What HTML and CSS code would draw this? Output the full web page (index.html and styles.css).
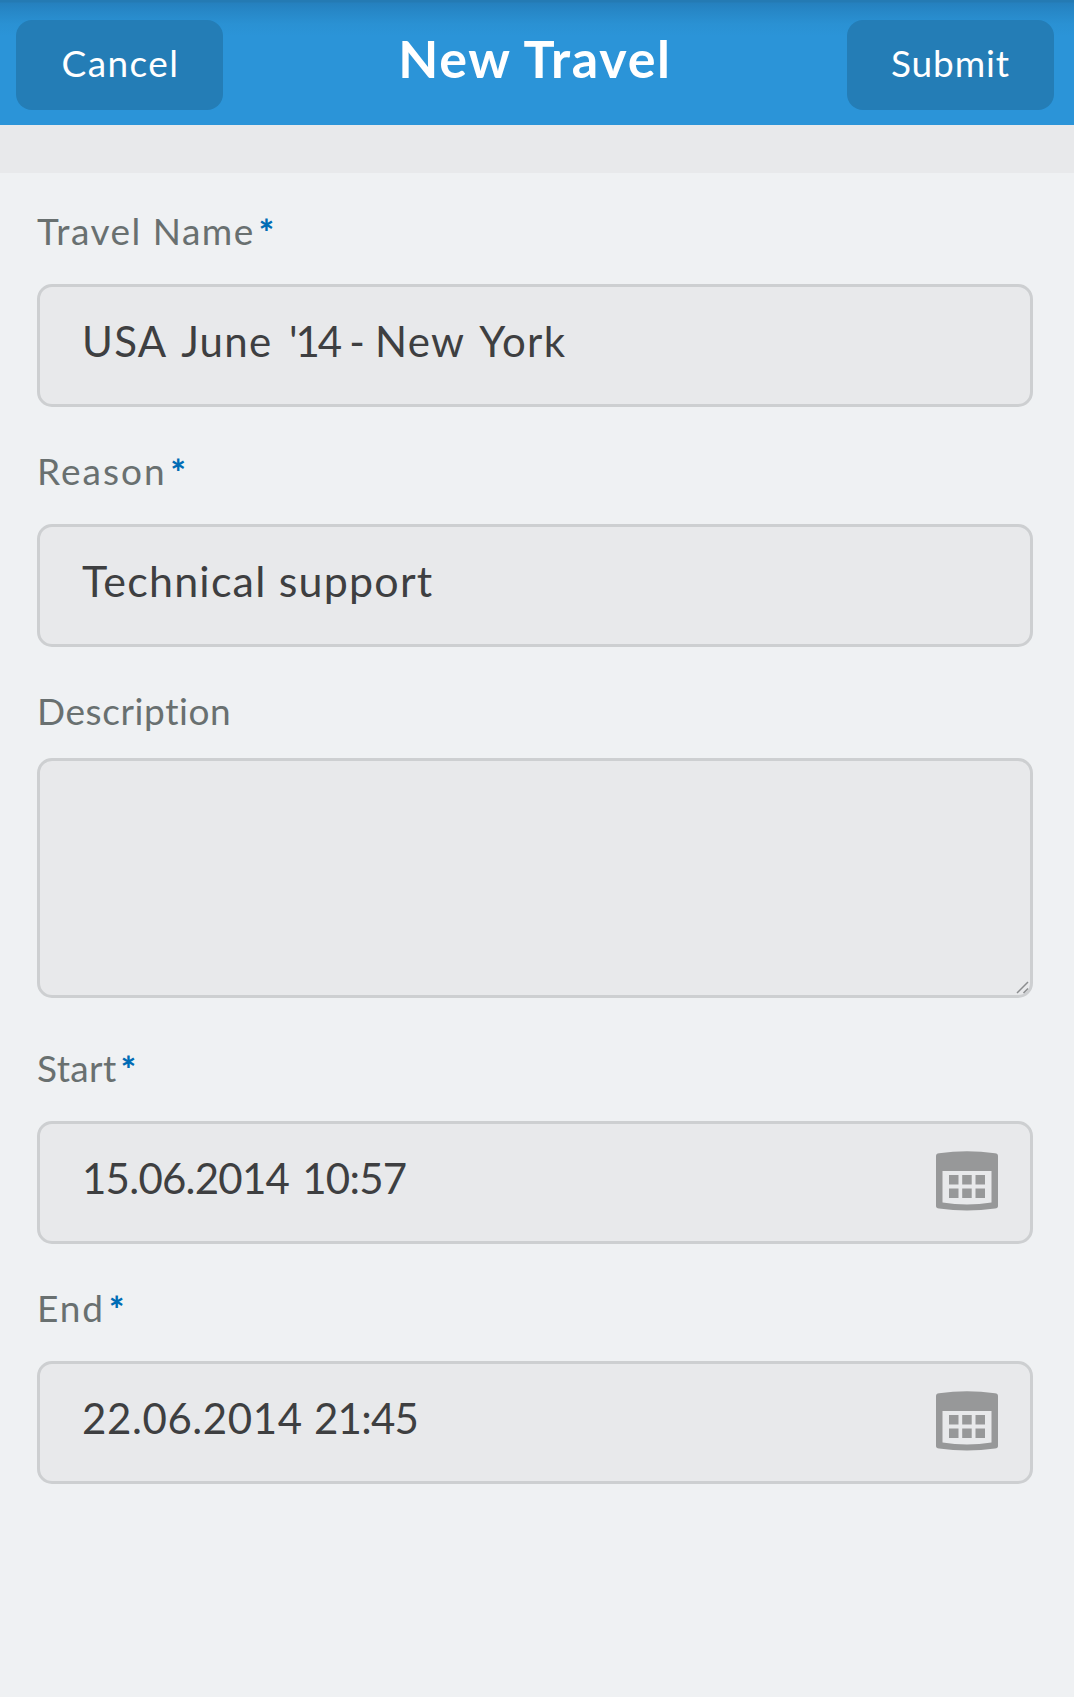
FILE: index.html
```html
<!DOCTYPE html>
<html lang="en">
<head>
<meta charset="utf-8">
<title>New Travel</title>
<link rel="stylesheet" href="styles.css">
</head>
<body>
<header class="bar">
  <button class="action cancel" type="button">Cancel</button>
  <h1 class="title">New Travel</h1>
  <button class="action submit" type="button">Submit</button>
</header>
<div class="strip"></div>
<form class="form">
  <div class="field">
    <div class="label"><span class="l-name">Travel Name</span><b class="req">*</b></div>
    <div class="input"><span class="v-name"><span class="wide">USA June <span class="year">'14</span></span> - <span class="wide">New York</span></span></div>
  </div>
  <div class="field">
    <div class="label"><span class="l-reason">Reason</span><b class="req">*</b></div>
    <div class="input"><span class="v-reason">Technical support</span></div>
  </div>
  <div class="field field-area">
    <div class="label"><span class="l-desc">Description</span></div>
    <div class="input area">
      <svg class="grip" width="13" height="13" viewBox="0 0 13 13"><path d="M1 12L12 1M7.500 12L12 7.500"/></svg>
    </div>
  </div>
  <div class="field">
    <div class="label"><span class="l-start">Start</span><b class="req">*</b></div>
    <div class="input"><span class="v-start">15.06.2014 10:57</span>
      <svg class="calendar" width="62" height="60" viewBox="0 0 62 60"><path fill-rule="evenodd" d="M0 5Q0 2.500 3 2.200Q31-1.800 59 2.200Q62 2.500 62 5V55Q62 57.300 59 57.600Q31 61.600 3 57.600Q0 57.300 0 55ZM6.500 20V51.500Q31 55.500 55.500 51.500V20Z"/><path d="M13 24h9.500v9.500H13zM26.200 24h9.500v9.500h-9.500zM39.500 24H49v9.500h-9.500zM13 37.500h9.500V47H13zM26.200 37.500h9.500V47h-9.500zM39.500 37.500H49V47h-9.500z"/></svg>
    </div>
  </div>
  <div class="field">
    <div class="label"><span class="l-end">End</span><b class="req">*</b></div>
    <div class="input"><span class="v-end">22.06.2014 <span class="time">21:45</span></span>
      <svg class="calendar" width="62" height="60" viewBox="0 0 62 60"><path fill-rule="evenodd" d="M0 5Q0 2.500 3 2.200Q31-1.800 59 2.200Q62 2.500 62 5V55Q62 57.300 59 57.600Q31 61.600 3 57.600Q0 57.300 0 55ZM6.500 20V51.500Q31 55.500 55.500 51.500V20Z"/><path d="M13 24h9.500v9.500H13zM26.200 24h9.500v9.500h-9.500zM39.500 24H49v9.500h-9.500zM13 37.500h9.500V47H13zM26.200 37.500h9.500V47h-9.500zM39.500 37.500H49V47h-9.500z"/></svg>
    </div>
  </div>
</form>
</body>
</html>
```

FILE: styles.css
```css
* { box-sizing: border-box; }
body {
  margin: 0;
  min-height: 1697px;
  background: #eff1f3;
  font-family: Lato, "Open Sans", sans-serif;
  font-variant-ligatures: none;
  color: #3e3f41;
}
.bar {
  display: flex;
  justify-content: space-between;
  align-items: flex-start;
  height: 125px;
  padding: 20px 20px 0 16px;
  background: linear-gradient(#247ab3 0, #247ab3 2px, #2580be 3px, #2788c8 12px, #2a91d3 24px, #2b94d8 36px);
}
.action {
  width: 207px;
  height: 90px;
  padding: 0 0 4px;
  border: 0;
  border-radius: 16px;
  background: #247db6;
  color: #fff;
  font: 400 37px/86px Lato, sans-serif;
}
.cancel { padding-left: 2px; letter-spacing: 1.400px; }
.submit { letter-spacing: 0.900px; }
.title {
  margin: 0;
  color: #fff;
  font-size: 52px;
  font-weight: 700;
  line-height: 77px;
  letter-spacing: 1.700px;
}
.strip { height: 48px; background: #e8e9eb; }
.form { padding: 0 41px 0 37px; }
.field { padding-bottom: 6px; }
.label {
  display: flex;
  height: 111px;
  padding-top: 36px;
  color: #697070;
  font-size: 37px;
  line-height: 44px;
}
.field-area { padding-bottom: 12px; }
.field-area .label { height: 105px; }
.req { margin: 1px 0 0 4px; color: #006cb5; font-size: 36px; font-weight: 900; }
.l-name { letter-spacing: 1.500px; }
.l-reason { letter-spacing: 2px; }
.l-desc { letter-spacing: 0.600px; }
.l-start { letter-spacing: 0.400px; }
.l-end { letter-spacing: 1.900px; }
.input {
  display: flex;
  justify-content: space-between;
  height: 123px;
  padding: 26px 32px 0 42px;
  border: 3px solid #cdcfd1;
  border-radius: 15px;
  background: #e8e9eb;
  font-size: 42px;
  line-height: 56px;
  white-space: nowrap;
}
.v-name { letter-spacing: 1.250px; word-spacing: -3px; }
.wide { word-spacing: 4.500px; }
.year { letter-spacing: -2px; }
.v-reason { font-size: 43px; letter-spacing: 1.200px; }
.v-start { letter-spacing: -0.750px; word-spacing: 3px; }
.v-end { letter-spacing: 0.600px; }
.time { letter-spacing: -0.800px; }
.area {
  height: 240px;
  justify-content: flex-end;
  align-items: flex-end;
  padding: 0 1px 1px 0;
}
.grip { fill: none; stroke: #8b8d8f; stroke-width: 1.5; }
.calendar { margin-top: 1px; fill: #979899; }
```
